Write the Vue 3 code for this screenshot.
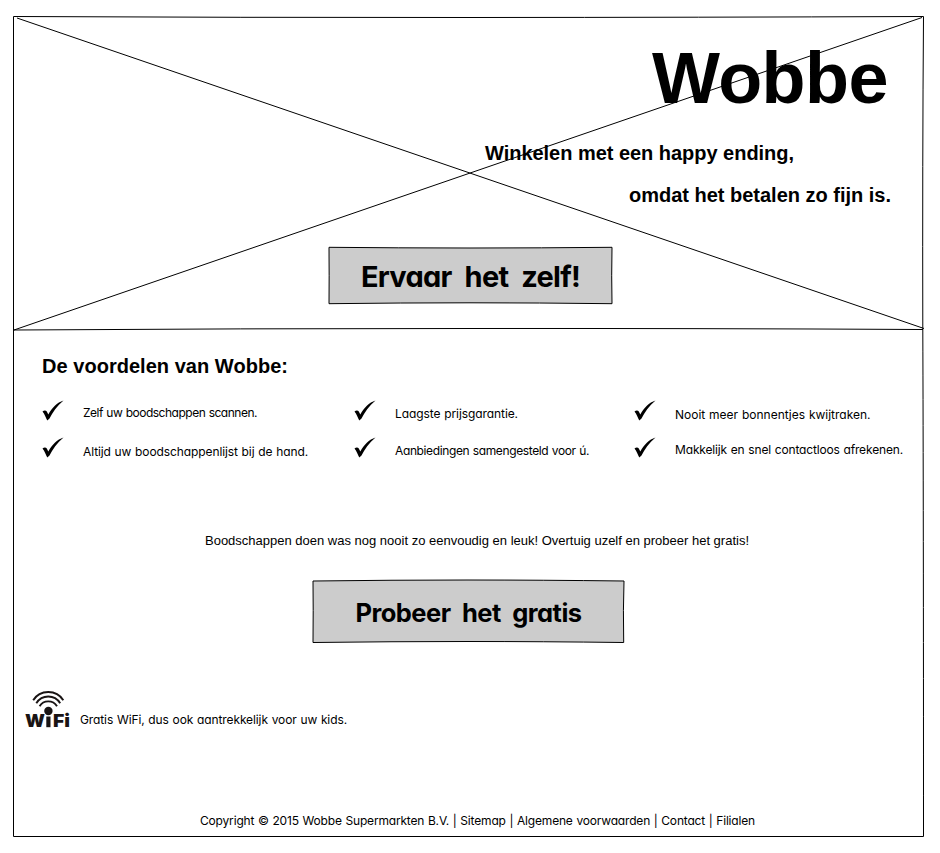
<script setup>
// Spreads the letter spacing so a line fills the given width.
const vFit = {
  async mounted(el, { value }) {
    const apply = () => {
      el.style.letterSpacing = '0px'
      const natural = el.getBoundingClientRect().width
      const count = el.textContent.length
      el.style.letterSpacing = `${(value - natural) / count}px`
    }
    apply()
    await document.fonts.ready
    apply()
  },
}

const columns = [
  [
    { text: 'Zelf uw boodschappen scannen.', width: 174, drop: 3 },
    { text: 'Altijd uw boodschappenlijst bij de hand.', width: 225, drop: 5 },
  ],
  [
    { text: 'Laagste prijsgarantie.', width: 123, drop: 4 },
    { text: 'Aanbiedingen samengesteld voor ú.', width: 194, drop: 4 },
  ],
  [
    { text: 'Nooit meer bonnentjes kwijtraken.', width: 195.5, drop: 5 },
    { text: 'Makkelijk en snel contactloos afrekenen.', width: 228, drop: 3 },
  ],
]
</script>

<template>
  <div class="page">
    <svg class="sketch" viewBox="0 0 940 853" aria-hidden="true">
      <path d="M13.5 16.5Q240 17.6 470 17.5T923.5 16.5Q922.4 160 922.8 330Q923.5 500 923.5 836.5H13.5Z" />
      <path d="M14 330Q240 328.5 469 328.5Q700 328.3 923 329.5" />
      <path d="M17 18L924 328.5M14 330L922 17.5" />
    </svg>

    <header class="hero">
      <h1 v-fit="236">Wobbe</h1>
      <p class="lead first"><span v-fit="309">Winkelen met een happy ending,</span></p>
      <p class="lead second"><span v-fit="262">omdat het betalen zo fijn is.</span></p>
      <button class="cta small">
        <svg viewBox="0 0 285 59" aria-hidden="true">
          <path d="M1 1.3Q70 2 142 2T284 1.3Q283.4 30 284 57.7Q210 56.8 142 56.8T1 57.7Q1.3 30 1 1.3Z" />
        </svg>
        <span v-fit="219">Ervaar het zelf!</span>
      </button>
    </header>

    <main>
      <h2><span v-fit="246">De voordelen van Wobbe:</span></h2>
      <div class="benefits">
        <ul v-for="(column, c) in columns" :key="c">
          <li v-for="item in column" :key="item.text">
            <svg viewBox="0 0 22 21" aria-hidden="true">
              <path d="M.5 11.5C2 10 4 10 4.8 11.5L6.3 14.5C10 8 15 2.5 21.5.5C15 6 10.5 12.5 7.5 18.5L5.3 20.5C4 18 2.5 14 .5 11.5Z" />
            </svg>
            <span v-fit="item.width" class="hand" :style="{ paddingTop: item.drop + 'px' }">{{ item.text }}</span>
          </li>
        </ul>
      </div>
      <p class="pitch"><span v-fit="544">Boodschappen doen was nog nooit zo eenvoudig en leuk! Overtuig uzelf en probeer het gratis!</span></p>
      <button class="cta large">
        <svg viewBox="0 0 313 65" aria-hidden="true">
          <path d="M1 2Q80 1 155 1T312 2Q311 30 311.7 63.5Q230 62.5 155 62.5T1 63.5Q1.4 30 1 2Z" />
        </svg>
        <span v-fit="226">Probeer het gratis</span>
      </button>
      <div class="wifi">
        <svg viewBox="0 0 46 40" role="img" aria-label="WiFi">
          <g class="waves">
            <path d="M8.2 10.2C15-.8 31.5-.8 38.3 10.2" />
            <path d="M11.3 13.2C17 4.2 29.5 4.2 35.2 13.2" />
            <path d="M14.6 16.2C18.5 9.7 28 9.7 32 16.2" />
          </g>
          <circle cx="23.4" cy="21" r="4.2" />
          <rect x="21.3" y="26.5" width="4.2" height="10.7" />
          <text x="0" y="37" textLength="20" lengthAdjust="spacingAndGlyphs">W</text>
          <text x="28" y="37" textLength="17" lengthAdjust="spacingAndGlyphs">Fi</text>
        </svg>
        <span v-fit="267" class="hand">Gratis WiFi, dus ook aantrekkelijk voor uw kids.</span>
      </div>
    </main>

    <footer>
      <span v-fit="555" class="hand">Copyright © 2015 Wobbe Supermarkten B.V. | Sitemap | Algemene voorwaarden | Contact | Filialen</span>
    </footer>
  </div>
</template>

<style>
body {
  background: #fff;
}
</style>

<style scoped>
.page {
  position: relative;
  box-sizing: border-box;
  width: 940px;
  height: 853px;
  padding: 16px 16px 16px 13px;
  color: #000;
  font-family: "Liberation Sans", Arial, sans-serif;
  white-space: nowrap;
  overflow: hidden;
}
.sketch {
  position: absolute;
  inset: 0;
  width: 940px;
  height: 853px;
  fill: none;
  stroke: #000;
  stroke-width: 1;
}
.hero,
main,
footer {
  position: relative;
}
.hero {
  display: flex;
  flex-direction: column;
  align-items: flex-start;
  box-sizing: border-box;
  height: 313px;
  padding-top: 22px;
}
h1,
h2,
p,
ul {
  margin: 0;
  padding: 0;
}
h1 {
  margin-left: 639px;
  font-size: 72px;
  line-height: 80px;
}
.lead,
h2 {
  font-size: 20px;
  font-weight: 700;
  line-height: 24px;
}
.lead.first {
  margin: 23px 0 0 472px;
}
.lead.second {
  margin: 18px 0 0 616px;
}
.hand,
.cta {
  font-family: "Comic Sans MS", Inter, sans-serif;
  font-feature-settings: "cv11";
}
.hand {
  font-size: 12px;
  line-height: 20px;
  word-spacing: 0.5px;
}
.cta {
  display: grid;
  place-items: center;
  padding: 0;
  border: 0;
  background: none;
  color: #000;
  font-weight: 700;
}
.cta > * {
  grid-area: 1 / 1;
}
.cta span {
  padding-top: 2px;
}
.cta svg {
  width: 100%;
  height: 100%;
  fill: #ccc;
  stroke: #000;
  stroke-width: 1;
}
.cta.small {
  width: 285px;
  height: 59px;
  margin: 39px 0 0 315px;
  font-size: 29px;
  word-spacing: 7px;
}
.cta.large {
  width: 313px;
  height: 65px;
  margin: 28px 0 0 299px;
  font-size: 25.5px;
  word-spacing: 6px;
}
h2 {
  padding: 25px 0 0 29px;
}
.benefits {
  display: grid;
  grid-template-columns: 312px 280px 290px;
  margin: 22px 0 0 29px;
}
ul {
  list-style: none;
}
li {
  display: flex;
  align-items: flex-start;
  gap: 19px;
  height: 37px;
}
li svg {
  width: 22px;
  height: 21px;
}
.pitch {
  padding: 57px 0 0 192px;
  font-size: 13px;
  line-height: 20px;
}
.wifi {
  display: flex;
  align-items: flex-end;
  gap: 9px;
  margin: 46px 0 0 12px;
}
.wifi svg {
  width: 46px;
  height: 40px;
  fill: #191414;
}
.wifi text {
  font: 900 17.5px Inter, sans-serif;
}
.waves {
  fill: none;
  stroke: #191414;
  stroke-width: 1.9;
}
footer {
  display: flex;
  padding: 81px 0 0 187px;
}
</style>
